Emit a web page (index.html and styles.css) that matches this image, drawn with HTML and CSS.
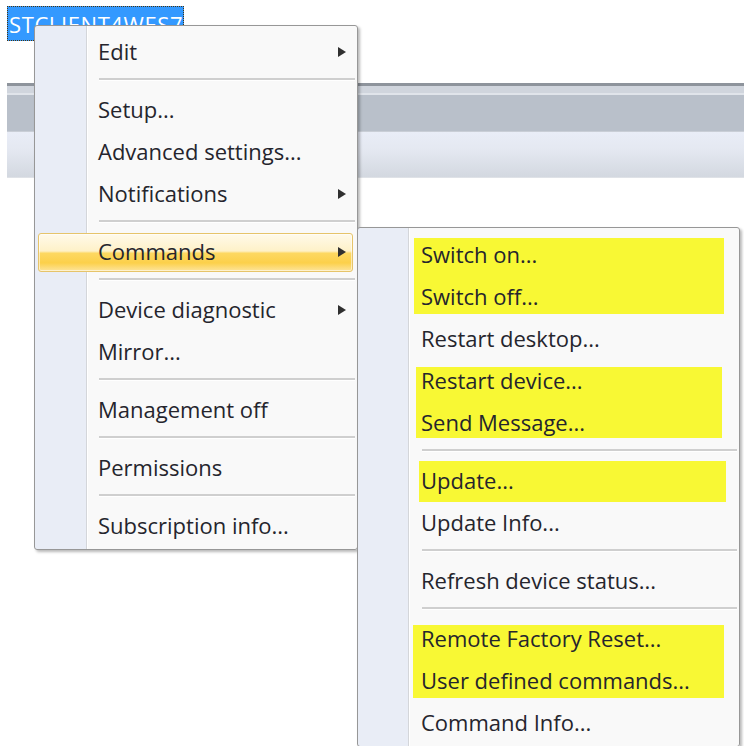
FILE: index.html
```html
<!DOCTYPE html>
<html lang="en">
<head>
<meta charset="utf-8">
<title>Device context menu</title>
<link rel="stylesheet" href="styles.css">
</head>
<body>
<div class="screen">
  <div class="node"><span class="node-label">STCLIENT4WES7</span></div>

  <div class="ribbon">
    <div class="ribbon-edge"></div>
    <div class="ribbon-tabs"></div>
    <div class="ribbon-band"></div>
    <div class="ribbon-head"></div>
  </div>

  <ul class="menu menu-main">
    <li class="item">Edit<span class="arrow"></span></li>
    <li class="sep"></li>
    <li class="item">Setup...</li>
    <li class="item">Advanced settings...</li>
    <li class="item">Notifications<span class="arrow"></span></li>
    <li class="sep"></li>
    <li class="item item-active">Commands<span class="arrow"></span></li>
    <li class="sep"></li>
    <li class="item">Device diagnostic<span class="arrow"></span></li>
    <li class="item">Mirror...</li>
    <li class="sep"></li>
    <li class="item">Management off</li>
    <li class="sep"></li>
    <li class="item">Permissions</li>
    <li class="sep"></li>
    <li class="item">Subscription info...</li>
  </ul>

  <ul class="menu menu-sub">
    <li class="mark mark-power">
      <ul class="group">
        <li class="item">Switch on...</li>
        <li class="item">Switch off...</li>
      </ul>
    </li>
    <li class="item">Restart desktop...</li>
    <li class="mark mark-restart">
      <ul class="group">
        <li class="item">Restart device...</li>
        <li class="item">Send Message...</li>
      </ul>
    </li>
    <li class="sep"></li>
    <li class="mark mark-update">
      <ul class="group">
        <li class="item">Update...</li>
      </ul>
    </li>
    <li class="item">Update Info...</li>
    <li class="sep"></li>
    <li class="item">Refresh device status...</li>
    <li class="sep"></li>
    <li class="mark mark-reset">
      <ul class="group">
        <li class="item">Remote Factory Reset...</li>
        <li class="item">User defined commands...</li>
      </ul>
    </li>
    <li class="item">Command Info...</li>
  </ul>
</div>
</body>
</html>
```

FILE: styles.css
```css
* {
  box-sizing: border-box;
}

html,
body {
  margin: 0;
  padding: 0;
  background: #ffffff;
}

body {
  font-family: "Open Sans", "Noto Sans", "Liberation Sans", sans-serif;
  overflow: hidden;
}

.screen {
  position: relative;
  width: 744px;
  height: 746px;
  overflow: hidden;
  background: #ffffff;
}

/* selected tree node behind the menu */
.node {
  margin: 6px 0 0 7px;
  width: 177px;
  height: 35px;
  background: #3399ff;
  border: 1px dotted #4a3510;
  overflow: hidden;
}

.node-label {
  display: block;
  padding: 1px 0 0 1px;
  color: #ffffff;
  font-size: 22px;
  line-height: 32px;
  letter-spacing: 0.6px;
  white-space: nowrap;
}

/* window chrome strip */
.ribbon {
  margin: 42px 0 0 7px;
}

.ribbon-edge {
  height: 3px;
  background: #8e949c;
}

.ribbon-tabs {
  height: 9px;
  background: #d0d5dd;
  border-bottom: 2px solid #e0e4ea;
}

.ribbon-band {
  height: 37px;
  background: #b9c0ca;
  border-bottom: 1px solid #c9ced6;
}

.ribbon-head {
  height: 46px;
  background: linear-gradient(to bottom, #e9edf7 0%, #e4e8f1 40%, #d3d8e0 100%);
  border-bottom: 1px solid #dfe2e7;
}

/* context menus */
.menu {
  position: absolute;
  display: flex;
  flex-direction: column;
  margin: 0;
  list-style: none;
  border: 1px solid #979797;
  border-radius: 3px;
  box-shadow: 2px 2px 3px rgba(0, 0, 0, 0.28);
  color: #25252d;
  font-size: 22px;
}

.menu-main {
  left: 34px;
  top: 25px;
  width: 324px;
  padding: 5px 0 2px;
  background:
    linear-gradient(to right,
      #e9edf6 0, #e9edf6 51px,
      #d4d6da 51px, #d4d6da 52px,
      #ffffff 52px, #ffffff 53px,
      #f9f9f9 53px);
}

.menu-sub {
  left: 357px;
  top: 227px;
  width: 383px;
  padding: 6px 0 2px;
  background:
    linear-gradient(to right,
      #e9edf6 0, #e9edf6 50px,
      #d4d6da 50px, #d4d6da 51px,
      #ffffff 51px, #ffffff 52px,
      #f9f9f9 52px);
}

.group {
  display: flex;
  flex-direction: column;
  margin: 0;
  padding: 0;
  list-style: none;
}

.item {
  position: relative;
  display: flex;
  align-items: center;
  justify-content: space-between;
  flex: none;
  height: 39px;
  margin: 2px 4px 1px 3px;
  padding: 0 0 3px 59px;
  border: 1px solid transparent;
  border-radius: 3px;
  white-space: nowrap;
}

.item-active {
  border-color: #e6c46a;
  background: linear-gradient(to bottom,
    #fffaea 0%, #fef1c8 46%,
    #fdd862 52%, #fcd04a 78%, #fde49a 100%);
  box-shadow: inset 0 0 0 1px rgba(255, 255, 255, 0.55);
}

.arrow {
  width: 0;
  height: 0;
  margin: 2px 6px 0 0;
  border-left: 8px solid #303030;
  border-top: 5px solid transparent;
  border-bottom: 5px solid transparent;
}

.sep {
  flex: none;
  height: 16px;
  margin: 0 2px 0 64px;
  padding-top: 5px;
}

.sep::before {
  content: "";
  display: block;
  height: 2px;
  background: #cfcfcf;
  border-bottom: 1px solid #ffffff;
}

/* highlighter marks laid over groups of commands */
.mark {
  position: relative;
  isolation: isolate;
}

.mark::before {
  content: "";
  position: absolute;
  z-index: -1;
  background: #f8f834;
}

.mark-power::before {
  top: 4px;
  bottom: 4px;
  left: 56px;
  right: 15px;
}

.mark-restart::before {
  top: 7px;
  bottom: 6px;
  left: 58px;
  right: 17px;
}

.mark-update::before {
  top: 1px;
  bottom: 0;
  left: 61px;
  right: 13px;
}

.mark-reset::before {
  top: 7px;
  bottom: 4px;
  left: 55px;
  right: 15px;
}
```
